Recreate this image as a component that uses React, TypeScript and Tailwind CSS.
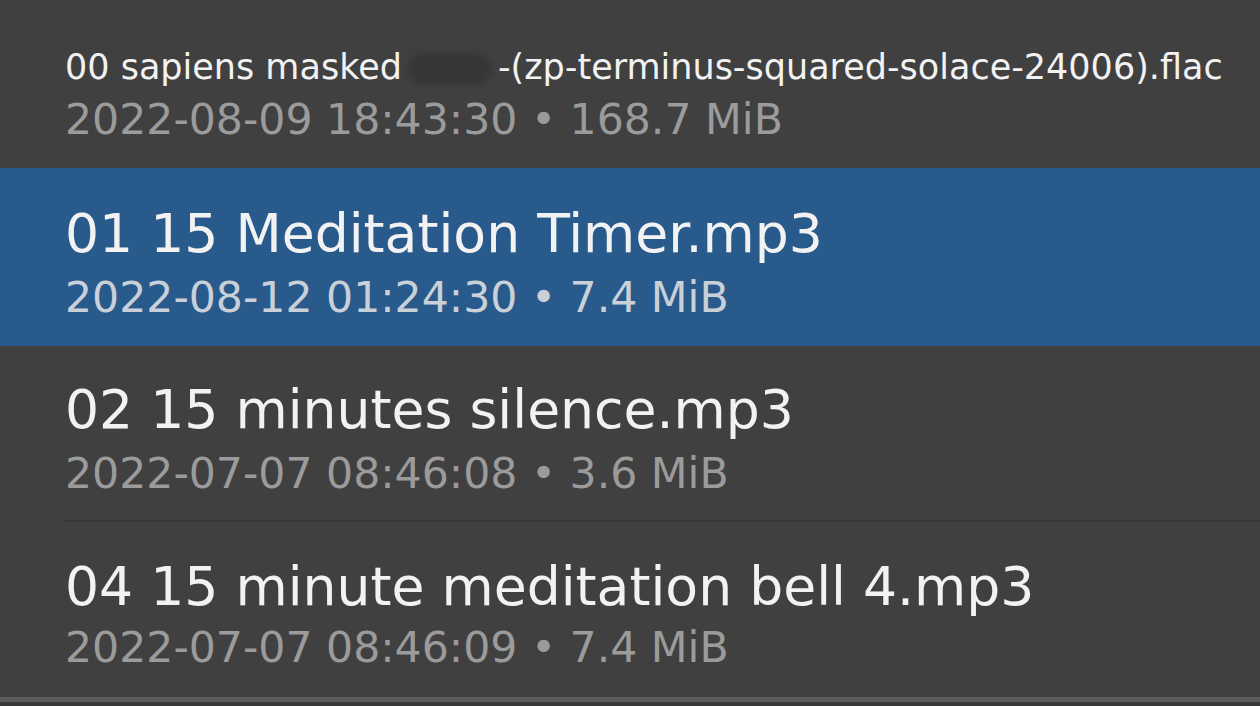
import React from "react";

type Track = {
  name: React.ReactNode;
  meta: string;
  selected?: boolean;
  rowClass: string;
  titleClass: string;
  metaClass: string;
  divider?: boolean;
};

const TRACKS: Track[] = [
  {
    name: (
      <>
        00 sapiens masked
        <span className="inline-block align-middle w-[84px] h-[32px] mx-[6px] rounded-full bg-[#363636] blur-[3px]" />
        -(zp-terminus-squared-solace-24006).flac
      </>
    ),
    meta: "2022-08-09 18:43:30 • 168.7 MiB",
    rowClass: "h-[168px] pt-[47px]",
    titleClass: "text-[35px] leading-[40px]",
    metaClass: "mt-[8px]",
  },
  {
    name: "01 15 Meditation Timer.mp3",
    meta: "2022-08-12 01:24:30 • 7.4 MiB",
    selected: true,
    rowClass: "h-[178px] pt-[36px]",
    titleClass: "text-[53.6px] leading-[60px]",
    metaClass: "mt-[9px]",
  },
  {
    name: "02 15 minutes silence.mp3",
    meta: "2022-07-07 08:46:08 • 3.6 MiB",
    rowClass: "h-[174px] pt-[34px]",
    titleClass: "text-[53.6px] leading-[60px]",
    metaClass: "mt-[9px]",
    divider: true,
  },
  {
    name: "04 15 minute meditation bell 4.mp3",
    meta: "2022-07-07 08:46:09 • 7.4 MiB",
    rowClass: "h-[175px] pt-[35px]",
    titleClass: "text-[53.6px] leading-[60px]",
    metaClass: "mt-[6px]",
  },
];

export default function App() {
  return (
    <div className="w-[1260px] h-[706px] overflow-hidden flex flex-col bg-[#404040] font-['DejaVu_Sans',sans-serif]">
      {TRACKS.map((t, i) => (
        <div key={i} className="flex flex-col shrink-0">
          <div
            className={`${t.rowClass} pl-[65px] flex flex-col ${
              t.selected ? "bg-[#285a8c]" : ""
            }`}
          >
            <div className={`${t.titleClass} text-[#f2f2f2] whitespace-nowrap`}>{t.name}</div>
            <div
              className={`${t.metaClass} text-[42.6px] leading-[48px] whitespace-nowrap ${
                t.selected ? "text-[#c9d0d8]" : "text-[#9b9b9b]"
              }`}
            >
              {t.meta}
            </div>
          </div>
          {t.divider && <div className="ml-[64px] h-[2px] bg-[#383838]" />}
        </div>
      ))}
      {/* bottom edge of the list */}
      <div className="h-[5px] bg-[#5c5c5c] shrink-0" />
      <div className="flex-1 bg-[#383838]" />
    </div>
  );
}
